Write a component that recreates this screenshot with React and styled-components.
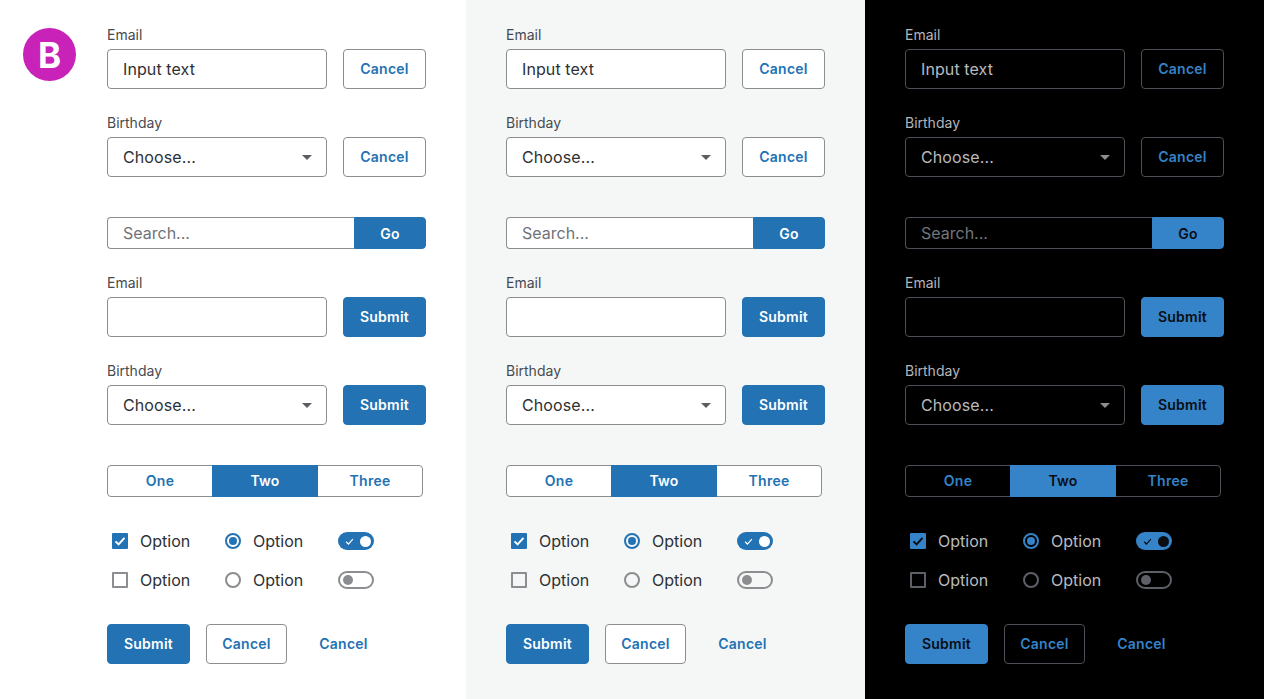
import React from 'react';
import styled, { createGlobalStyle, ThemeProvider } from 'styled-components';

const lightTheme = {
  bg: '#ffffff',
  field: '#ffffff',
  border: '#8b8d91',
  label: '#474a4f',
  text: '#2d3035',
  muted: '#6f7277',
  blue: '#2272b4',
  onBlue: '#ffffff',
  arrow: '#5b5e63',
  off: '#8b8d91',
};

const paleTheme = { ...lightTheme, bg: '#f5f7f6' };

const darkTheme = {
  bg: '#000000',
  field: '#000000',
  border: '#4c4f55',
  label: '#b4b6b9',
  text: '#b9bbbe',
  muted: '#73767b',
  blue: '#3583c8',
  onBlue: '#0a0d12',
  arrow: '#8b8d91',
  off: '#5d6066',
};

const GlobalStyle = createGlobalStyle`
  html, body {
    margin: 0;
    padding: 0;
    background: #fff;
  }
  body {
    font-family: Inter, "Liberation Sans", sans-serif;
    -webkit-font-smoothing: antialiased;
  }
`;

const Page = styled.div`
  display: flex;
  width: 1264px;
  height: 699px;
  overflow: hidden;
`;

const Panel = styled.section`
  display: flex;
  align-items: flex-start;
  width: ${(p) => (p.$wide ? 466 : 399)}px;
  height: 100%;
  box-sizing: border-box;
  padding: 27px 0 0 ${(p) => (p.$wide ? 23 : 40)}px;
  background: ${(p) => p.theme.bg};
`;

const Logo = styled.div`
  display: flex;
  align-items: center;
  justify-content: center;
  width: 53px;
  height: 53px;
  margin: 1px 31px 0 0;
  border-radius: 50%;
  background: #c922b8;
  color: #fff;
  font-size: 35px;
  font-weight: 700;
`;

const Stack = styled.div`
  display: flex;
  flex-direction: column;
  width: 319px;
`;

const Group = styled.div`
  display: flex;
  flex-direction: column;
  margin-top: ${(p) => p.$top || 0}px;
`;

const Label = styled.label`
  height: 16px;
  margin-bottom: 6px;
  font-size: 14px;
  line-height: 16px;
  color: ${(p) => p.theme.label};
`;

const FieldRow = styled.div`
  display: flex;
  gap: 16px;
`;

const TextField = styled.div`
  display: flex;
  align-items: center;
  justify-content: space-between;
  width: 220px;
  height: 40px;
  box-sizing: border-box;
  padding: 0 14px 0 15px;
  border: 1px solid ${(p) => p.theme.border};
  border-radius: 4px;
  background: ${(p) => p.theme.field};
  font-size: 16px;
  letter-spacing: 0.1px;
  color: ${(p) => p.theme.text};
`;

const Arrow = styled.span`
  width: 0;
  height: 0;
  border-left: 5px solid transparent;
  border-right: 5px solid transparent;
  border-top: 5px solid ${(p) => p.theme.arrow};
`;

const Button = styled.button`
  width: ${(p) => p.$w || 83}px;
  height: 40px;
  padding: 0 0 1px;
  box-sizing: border-box;
  border: 1px solid ${(p) => (p.$kind === 'ghost' ? 'transparent' : p.$kind === 'solid' ? p.theme.blue : p.theme.border)};
  border-radius: 4px;
  background: ${(p) => (p.$kind === 'solid' ? p.theme.blue : p.$kind === 'ghost' ? 'transparent' : p.theme.field)};
  color: ${(p) => (p.$kind === 'solid' ? p.theme.onBlue : p.theme.blue)};
  font-family: inherit;
  font-size: 14px;
  font-weight: 600;
  letter-spacing: 0.25px;
`;

const SearchBar = styled.div`
  display: flex;
  height: 32px;
  margin-top: 40px;
`;

const SearchField = styled.div`
  display: flex;
  align-items: center;
  flex: 1;
  box-sizing: border-box;
  padding-left: 15px;
  border: 1px solid ${(p) => p.theme.border};
  border-right: 0;
  border-radius: 4px 0 0 4px;
  background: ${(p) => p.theme.field};
  font-size: 16px;
  color: ${(p) => p.theme.muted};
`;

const GoButton = styled(Button)`
  width: 72px;
  height: 32px;
  padding: 0;
  border-radius: 0 4px 4px 0;
`;

const Segments = styled.div`
  display: grid;
  grid-template-columns: 104px 106px 104px;
  width: 316px;
  height: 32px;
  margin-top: 40px;
  box-sizing: border-box;
  border: 1px solid ${(p) => p.theme.border};
  border-radius: 4px;
  background: ${(p) => p.theme.field};
`;

const Segment = styled.div`
  display: flex;
  align-items: center;
  justify-content: center;
  margin: -1px 0;
  padding-bottom: 1px;
  background: ${(p) => (p.$active ? p.theme.blue : 'transparent')};
  color: ${(p) => (p.$active ? p.theme.onBlue : p.theme.blue)};
  font-size: 14px;
  font-weight: 600;
  letter-spacing: 0.25px;
`;

const Options = styled.div`
  display: grid;
  grid-template-columns: 113px 113px auto;
  grid-auto-rows: 24px;
  row-gap: 15px;
  margin-top: 32px;
`;

const Option = styled.div`
  display: flex;
  align-items: center;
  gap: 12px;
  padding-left: 5px;
  font-size: 16px;
  color: ${(p) => p.theme.text};
`;

const CheckBox = styled.span`
  display: flex;
  align-items: center;
  justify-content: center;
  width: 16px;
  height: 16px;
  box-sizing: border-box;
  border: 2px solid ${(p) => (p.$on ? p.theme.blue : p.theme.off)};
  border-radius: 1px;
  background: ${(p) => (p.$on ? p.theme.blue : 'transparent')};
  color: ${(p) => p.theme.onBlue};
`;

const Radio = styled.span`
  display: flex;
  align-items: center;
  justify-content: center;
  width: 16px;
  height: 16px;
  box-sizing: border-box;
  border: 2px solid ${(p) => (p.$on ? p.theme.blue : p.theme.off)};
  border-radius: 50%;

  &::after {
    content: '';
    display: ${(p) => (p.$on ? 'block' : 'none')};
    width: 8px;
    height: 8px;
    border-radius: 50%;
    background: ${(p) => p.theme.blue};
  }
`;

const ToggleCell = styled.div`
  display: flex;
  align-items: center;
  padding-left: 5px;
`;

const Toggle = styled.span`
  display: flex;
  align-items: center;
  justify-content: ${(p) => (p.$on ? 'space-between' : 'flex-start')};
  width: 36px;
  height: 18px;
  box-sizing: border-box;
  padding: ${(p) => (p.$on ? '0 3px 0 7px' : '0 2px 0 3px')};
  border: ${(p) => (p.$on ? 0 : 2)}px solid ${(p) => p.theme.off};
  border-radius: 9px;
  background: ${(p) => (p.$on ? p.theme.blue : 'transparent')};
  color: ${(p) => p.theme.onBlue};
`;

const Knob = styled.span`
  width: ${(p) => (p.$on ? 11 : 10)}px;
  height: ${(p) => (p.$on ? 11 : 10)}px;
  border-radius: 50%;
  background: ${(p) => (p.$on ? p.theme.onBlue : p.theme.off)};
`;

const Actions = styled.div`
  display: flex;
  gap: 16px;
  margin-top: 32px;
`;

const Tick = ({ size, weight }) => (
  <svg width={size} height={size} viewBox="0 0 12 12" fill="none" aria-hidden="true">
    <path d="M1.5 6.4 4.6 9.4 10.5 2.8" stroke="currentColor" strokeWidth={weight} />
  </svg>
);

const Column = () => (
  <Stack>
    <Group>
      <Label>Email</Label>
      <FieldRow>
        <TextField>Input text</TextField>
        <Button>Cancel</Button>
      </FieldRow>
    </Group>
    <Group $top={26}>
      <Label>Birthday</Label>
      <FieldRow>
        <TextField>
          Choose...
          <Arrow />
        </TextField>
        <Button>Cancel</Button>
      </FieldRow>
    </Group>
    <SearchBar>
      <SearchField>Search...</SearchField>
      <GoButton $kind="solid">Go</GoButton>
    </SearchBar>
    <Group $top={26}>
      <Label>Email</Label>
      <FieldRow>
        <TextField />
        <Button $kind="solid">Submit</Button>
      </FieldRow>
    </Group>
    <Group $top={26}>
      <Label>Birthday</Label>
      <FieldRow>
        <TextField>
          Choose...
          <Arrow />
        </TextField>
        <Button $kind="solid">Submit</Button>
      </FieldRow>
    </Group>
    <Segments>
      <Segment>One</Segment>
      <Segment $active>Two</Segment>
      <Segment>Three</Segment>
    </Segments>
    <Options>
      <Option>
        <CheckBox $on>
          <Tick size={12} weight={2} />
        </CheckBox>
        Option
      </Option>
      <Option>
        <Radio $on />
        Option
      </Option>
      <ToggleCell>
        <Toggle $on>
          <Tick size={9} weight={1.6} />
          <Knob $on />
        </Toggle>
      </ToggleCell>
      <Option>
        <CheckBox />
        Option
      </Option>
      <Option>
        <Radio />
        Option
      </Option>
      <ToggleCell>
        <Toggle>
          <Knob />
        </Toggle>
      </ToggleCell>
    </Options>
    <Actions>
      <Button $kind="solid">Submit</Button>
      <Button $w={81}>Cancel</Button>
      <Button $kind="ghost" $w={81}>
        Cancel
      </Button>
    </Actions>
  </Stack>
);

const App = () => (
  <>
    <GlobalStyle />
    <Page>
      <ThemeProvider theme={lightTheme}>
        <Panel $wide>
          <Logo>B</Logo>
          <Column />
        </Panel>
      </ThemeProvider>
      <ThemeProvider theme={paleTheme}>
        <Panel>
          <Column />
        </Panel>
      </ThemeProvider>
      <ThemeProvider theme={darkTheme}>
        <Panel>
          <Column />
        </Panel>
      </ThemeProvider>
    </Page>
  </>
);

export default App;
